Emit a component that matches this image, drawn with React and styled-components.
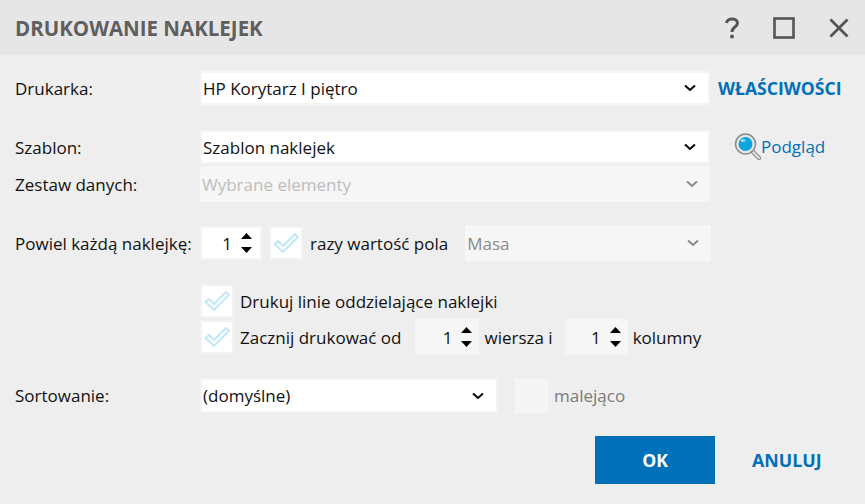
import React from "react";
import styled, { createGlobalStyle } from "styled-components";

const GlobalStyle = createGlobalStyle`
  html, body {
    margin: 0;
    padding: 0;
    background: #eeeeee;
  }
  * {
    box-sizing: border-box;
  }
`;

const Dialog = styled.div`
  width: 865px;
  height: 504px;
  overflow: hidden;
  background: #eeeeee;
  color: #111111;
  font-family: "Open Sans", "Noto Sans", sans-serif;
  font-size: 17px;
`;

const TitleBar = styled.div`
  height: 55px;
  background: #e6e6e6;
  display: flex;
  align-items: center;
  justify-content: space-between;
  padding: 0 16px 0 15px;
`;

const Title = styled.div`
  font-size: 20.5px;
  font-weight: 700;
  color: #5f5f5f;
`;

const WindowButtons = styled.div`
  display: flex;
  align-items: center;
  gap: 34px;
`;

const Body = styled.div`
  padding: 16px 0 0 15px;
`;

const Row = styled.div`
  display: flex;
  align-items: center;
  height: ${(p) => p.$h}px;
  margin-top: ${(p) => p.$mt || 0}px;
`;

const Label = styled.div`
  width: 185px;
  flex: none;
  white-space: nowrap;
`;

const Select = styled.div`
  width: ${(p) => p.$w}px;
  height: 100%;
  flex: none;
  display: flex;
  align-items: center;
  justify-content: space-between;
  padding: 0 12px 0 ${(p) => (p.$disabled ? 2 : 1)}px;
  background: ${(p) => (p.$disabled ? "#f6f6f6" : "#ffffff")};
  border: ${(p) => (p.$disabled ? "none" : "2px solid #f4f4f4")};
  color: ${(p) => (p.$disabled ? (p.$dim ? "#8a8a8a" : "#bdbdbd") : "#111111")};
  margin-left: ${(p) => p.$ml || 0}px;
`;

const Spin = styled.div`
  width: ${(p) => p.$w}px;
  height: ${(p) => p.$h}px;
  flex: none;
  display: flex;
  align-items: center;
  justify-content: flex-end;
  padding-right: ${(p) => (p.$plain ? 7 : 8)}px;
  gap: 9px;
  background: ${(p) => (p.$plain ? "#f6f6f6" : "#ffffff")};
  border: ${(p) => (p.$plain ? "none" : "2px solid #f4f4f4")};
  margin-left: ${(p) => p.$ml || 0}px;
`;

const SpinArrows = styled.div`
  display: flex;
  flex-direction: column;
  gap: 8px;
`;

const Box = styled.div`
  width: 34px;
  height: 34px;
  flex: none;
  display: flex;
  align-items: center;
  justify-content: center;
  background: ${(p) => (p.$disabled ? "#f5f5f5" : "#ffffff")};
  border: ${(p) => (p.$disabled ? "none" : "2px solid #f2f2f2")};
  margin-left: ${(p) => p.$ml || 0}px;
`;

const Text = styled.span`
  margin-left: ${(p) => p.$ml || 0}px;
  color: ${(p) => p.$color || "#111111"};
  white-space: nowrap;
`;

const BoldLink = styled.span`
  margin-left: 8px;
  font-weight: 700;
  font-size: 17.6px;
  color: #0070b8;
  white-space: nowrap;
`;

const PreviewLink = styled.div`
  margin-left: 23px;
  display: flex;
  align-items: center;
  color: #0070b8;
  position: relative;
  top: -1px;
`;

const Footer = styled.div`
  display: flex;
  align-items: center;
  height: 48px;
  margin-top: 23px;
  padding-left: 580px;
`;

const OkButton = styled.div`
  width: 120px;
  height: 48px;
  display: flex;
  align-items: center;
  justify-content: center;
  background: #0070b8;
  color: #ffffff;
  font-weight: 700;
  font-size: 17.6px;
`;

const CancelButton = styled.div`
  margin-left: 37px;
  color: #0070b8;
  font-weight: 700;
  font-size: 17.8px;
`;

const Chevron = ({ color = "#000000" }) => (
  <svg width="12" height="8" viewBox="0 0 12 8">
    <path d="M1 1.5 L6 6 L11 1.5" fill="none" stroke={color} strokeWidth="2" />
  </svg>
);

const Arrows = () => (
  <SpinArrows>
    <svg width="11" height="6" viewBox="0 0 11 6" style={{ display: "block" }}>
      <path d="M5.5 0 L11 6 L0 6 Z" fill="#000" />
    </svg>
    <svg width="11" height="6" viewBox="0 0 11 6" style={{ display: "block" }}>
      <path d="M0 0 L11 0 L5.5 6 Z" fill="#000" />
    </svg>
  </SpinArrows>
);

const Check = () => (
  <svg width="26" height="22" viewBox="0 0 26 22">
    <path
      d="M1.5 12 L5 9 L10 14 L22 2 L25 5 L10 20 Z"
      fill="#fbfeff"
      stroke="#bfe6f5"
      strokeWidth="1.8"
      strokeLinejoin="miter"
    />
  </svg>
);

const Magnifier = () => (
  <svg width="28" height="28" viewBox="0 0 28 28">
    <path d="M18 18 L26 26" stroke="#8d8d8d" strokeWidth="4.5" strokeLinecap="round" />
    <path d="M18.5 18.5 L26 26" stroke="#e2e2e2" strokeWidth="2" strokeLinecap="round" />
    <circle cx="12.5" cy="12" r="10" fill="#e8e8e8" stroke="#8a8a8a" strokeWidth="1.5" />
    <circle cx="12.5" cy="12" r="7" fill="#0aa5dc" />
    <ellipse cx="10" cy="8.5" rx="2.5" ry="1.6" fill="#9fdcf2" />
  </svg>
);

export default function App() {
  return (
    <Dialog>
      <GlobalStyle />
      <TitleBar>
        <Title>DRUKOWANIE NAKLEJEK</Title>
        <WindowButtons>
          <svg width="14" height="22" viewBox="0 0 14 22">
            <path d="M1.5 6 C2 0.5 12.5 0.5 12.5 6 C12.5 10 7 10 7 15" fill="none" stroke="#555" strokeWidth="3" />
            <circle cx="7" cy="19.5" r="2" fill="#555" />
          </svg>
          <svg width="22" height="22" viewBox="0 0 22 22">
            <rect x="1.5" y="1.5" width="19" height="19" fill="none" stroke="#555" strokeWidth="2.6" />
          </svg>
          <svg width="20" height="20" viewBox="0 0 20 20">
            <path d="M1.5 1.5 L18.5 18.5 M18.5 1.5 L1.5 18.5" stroke="#555" strokeWidth="2.8" />
          </svg>
        </WindowButtons>
      </TitleBar>
      <Body>
        <Row $h={34}>
          <Label>Drukarka:</Label>
          <Select $w={510}>
            HP Korytarz I piętro
            <Chevron />
          </Select>
          <BoldLink>WŁAŚCIWOŚCI</BoldLink>
        </Row>
        <Row $h={34} $mt={25}>
          <Label>Szablon:</Label>
          <Select $w={510}>
            Szablon naklejek
            <Chevron />
          </Select>
          <PreviewLink>
            <Magnifier />
            Podgląd
          </PreviewLink>
        </Row>
        <Row $h={36} $mt={2}>
          <Label>Zestaw danych:</Label>
          <Select $w={510} $disabled>
            Wybrane elementy
            <Chevron color="#8a8a8a" />
          </Select>
        </Row>
        <Row $h={36} $mt={23}>
          <Label>Powiel każdą naklejkę:</Label>
          <Spin $w={62} $h={34}>
            1
            <Arrows />
          </Spin>
          <Box $ml={7}>
            <Check />
          </Box>
          <Text $ml={7}>razy wartość pola</Text>
          <Select $w={246} $disabled $dim $ml={17}>
            Masa
            <Chevron color="#8a8a8a" />
          </Select>
        </Row>
        <Row $h={34} $mt={23}>
          <Label />
          <Box>
            <Check />
          </Box>
          <Text $ml={6}>Drukuj linie oddzielające naklejki</Text>
        </Row>
        <Row $h={36} $mt={1}>
          <Label />
          <Box>
            <Check />
          </Box>
          <Text $ml={6}>Zacznij drukować od</Text>
          <Spin $w={64} $h={36} $plain $ml={14}>
            1
            <Arrows />
          </Spin>
          <Text $ml={5}>wiersza i</Text>
          <Spin $w={63} $h={36} $plain $ml={12}>
            1
            <Arrows />
          </Spin>
          <Text $ml={5}>kolumny</Text>
        </Row>
        <Row $h={35} $mt={23}>
          <Label>Sortowanie:</Label>
          <Select $w={298}>
            (domyślne)
            <Chevron />
          </Select>
          <Box $disabled $ml={16}>
          </Box>
          <Text $ml={6} $color="#7a7a7a">malejąco</Text>
        </Row>
        <Footer>
          <OkButton>OK</OkButton>
          <CancelButton>ANULUJ</CancelButton>
        </Footer>
      </Body>
    </Dialog>
  );
}
